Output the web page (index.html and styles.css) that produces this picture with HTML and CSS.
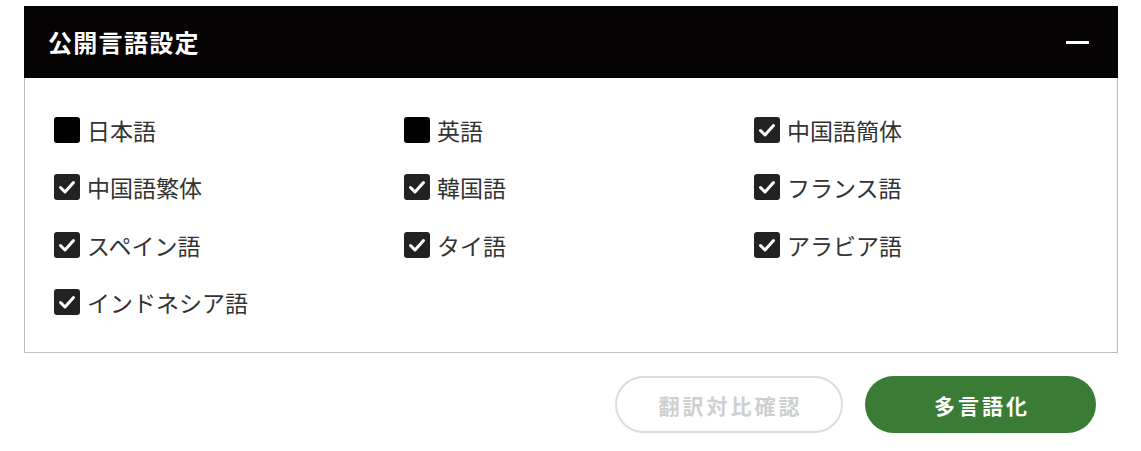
FILE: index.html
```html
<!DOCTYPE html>
<html lang="ja">
<head>
<meta charset="utf-8">
<link rel="stylesheet" href="styles.css">
</head>
<body>
<div class="wrap">
  <section class="panel">
    <header class="panel-head">
      <h2 class="panel-title">公開言語設定</h2>
      <span class="collapse" aria-label="閉じる"></span>
    </header>
    <div class="panel-body">
      <label class="opt"><span class="box"></span><span class="lbl">日本語</span></label>
      <label class="opt"><span class="box"></span><span class="lbl">英語</span></label>
      <label class="opt"><span class="box checked"><svg viewBox="0 0 26 26"><polyline points="6.5,13.5 11,18 19.5,8.5"/></svg></span><span class="lbl">中国語簡体</span></label>
      <label class="opt"><span class="box checked"><svg viewBox="0 0 26 26"><polyline points="6.5,13.5 11,18 19.5,8.5"/></svg></span><span class="lbl">中国語繁体</span></label>
      <label class="opt"><span class="box checked"><svg viewBox="0 0 26 26"><polyline points="6.5,13.5 11,18 19.5,8.5"/></svg></span><span class="lbl">韓国語</span></label>
      <label class="opt"><span class="box checked"><svg viewBox="0 0 26 26"><polyline points="6.5,13.5 11,18 19.5,8.5"/></svg></span><span class="lbl">フランス語</span></label>
      <label class="opt"><span class="box checked"><svg viewBox="0 0 26 26"><polyline points="6.5,13.5 11,18 19.5,8.5"/></svg></span><span class="lbl">スペイン語</span></label>
      <label class="opt"><span class="box checked"><svg viewBox="0 0 26 26"><polyline points="6.5,13.5 11,18 19.5,8.5"/></svg></span><span class="lbl">タイ語</span></label>
      <label class="opt"><span class="box checked"><svg viewBox="0 0 26 26"><polyline points="6.5,13.5 11,18 19.5,8.5"/></svg></span><span class="lbl">アラビア語</span></label>
      <label class="opt"><span class="box checked"><svg viewBox="0 0 26 26"><polyline points="6.5,13.5 11,18 19.5,8.5"/></svg></span><span class="lbl">インドネシア語</span></label>
    </div>
  </section>
  <div class="actions">
    <button class="btn btn-outline" disabled>翻訳対比確認</button>
    <button class="btn btn-primary">多言語化</button>
  </div>
</div>
</body>
</html>
```
FILE: styles.css
```css
* { box-sizing: border-box; }
html, body { margin: 0; padding: 0; background: #fff; }
body {
  font-family: "Noto Sans CJK JP", "Noto Sans", sans-serif;
  color: #333;
}
.wrap {
  margin: 6px 23px 0 24px;
}
.panel-head {
  height: 72px;
  background: #050303;
  display: flex;
  align-items: center;
  justify-content: space-between;
  padding: 0 29px 0 24px;
}
.panel-title {
  margin: 0;
  color: #fff;
  font-size: 24px;
  font-weight: 700;
  letter-spacing: 1.3px;
  line-height: 1;
}
.collapse {
  width: 23px;
  height: 3px;
  background: #fff;
  display: block;
}
.panel-body {
  border: 1px solid #bdbdbd;
  border-top: none;
  padding: 35.5px 0 34px 29px;
  display: grid;
  grid-template-columns: 350px 350px 1fr;
  grid-auto-rows: 32px;
  row-gap: 25.5px;
}
.opt {
  display: flex;
  align-items: center;
  gap: 7px;
}
.box {
  width: 26px;
  height: 26px;
  border-radius: 3px;
  background: #000;
  display: flex;
  align-items: center;
  justify-content: center;
  flex: none;
}
.box.checked { background: #222; }
.box svg { width: 26px; height: 26px; }
.box polyline {
  fill: none;
  stroke: #fff;
  stroke-width: 3;
  stroke-linecap: round;
  stroke-linejoin: round;
}
.lbl {
  font-size: 23px;
  line-height: 32px;
  color: #333;
}
.actions {
  display: flex;
  justify-content: flex-end;
  gap: 22px;
  margin-top: 23px;
  padding-right: 22px;
}
.btn {
  font-family: "Noto Sans CJK JP", "Noto Sans", sans-serif;
  font-weight: 700;
  font-size: 21px;
  height: 57px;
  border-radius: 29px;
  letter-spacing: 3px;
  display: flex;
  align-items: center;
  justify-content: center;
  padding: 0 0 0 3px;
}
.btn-outline {
  width: 228px;
  background: #fff;
  border: 2px solid #dcdcdc;
  color: #cfcfcf;
}
.btn-primary {
  width: 231px;
  background: #3a7c35;
  border: none;
  color: #fff;
}
```
